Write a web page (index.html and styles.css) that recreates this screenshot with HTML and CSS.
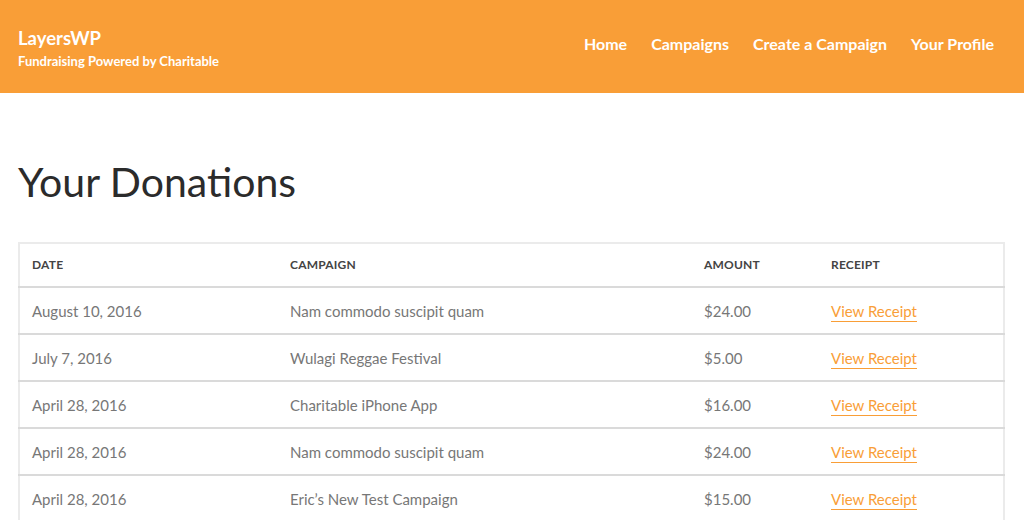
FILE: index.html
```html
<!DOCTYPE html>
<html>
<head>
<meta charset="utf-8">
<link rel="stylesheet" href="styles.css">
</head>
<body>
<header class="site-header">
  <div class="brand">
    <div class="site-title">LayersWP</div>
    <div class="site-tagline">Fundraising Powered by Charitable</div>
  </div>
  <nav class="nav">
    <a href="#">Home</a>
    <a href="#">Campaigns</a>
    <a href="#">Create a Campaign</a>
    <a href="#">Your Profile</a>
  </nav>
</header>
<main class="content">
  <h1 class="page-title">Your Donations</h1>
  <table class="donations">
    <thead>
      <tr><th class="c-date">Date</th><th class="c-camp">Campaign</th><th class="c-amt">Amount</th><th class="c-rec">Receipt</th></tr>
    </thead>
    <tbody>
      <tr><td>August 10, 2016</td><td>Nam commodo suscipit quam</td><td>$24.00</td><td><a href="#">View Receipt</a></td></tr>
      <tr><td>July 7, 2016</td><td>Wulagi Reggae Festival</td><td>$5.00</td><td><a href="#">View Receipt</a></td></tr>
      <tr><td>April 28, 2016</td><td>Charitable iPhone App</td><td>$16.00</td><td><a href="#">View Receipt</a></td></tr>
      <tr><td>April 28, 2016</td><td>Nam commodo suscipit quam</td><td>$24.00</td><td><a href="#">View Receipt</a></td></tr>
      <tr><td>April 28, 2016</td><td>Eric’s New Test Campaign</td><td>$15.00</td><td><a href="#">View Receipt</a></td></tr>
    </tbody>
  </table>
</main>
</body>
</html>
```

FILE: styles.css
```css
* { box-sizing: border-box; }
html, body { margin: 0; padding: 0; }
body {
  font-family: "Lato", "Open Sans", sans-serif;
  background: #fff;
  color: #333;
  overflow: hidden;
}
.site-header {
  background: #f99e37;
  height: 93px;
  display: flex;
  align-items: center;
  justify-content: space-between;
  padding: 0 30px 0 18px;
  color: #fff;
}
.brand { display: flex; flex-direction: column; gap: 4px; margin-top: 2px; }
.site-title { font-size: 18.5px; font-weight: 700; line-height: 22px; }
.site-tagline { font-size: 13px; font-weight: 700; line-height: 16px; }
.nav { display: flex; gap: 24px; margin-top: -6px; }
.nav a { color: #fff; text-decoration: none; font-weight: 700; font-size: 16px; }
.content { padding: 0 19px 0 18px; }
.page-title {
  font-weight: 400;
  font-size: 41px;
  line-height: 50px;
  margin: 0;
  padding: 64px 0 35px;
  color: #2b2b2b;
}
.donations {
  width: 100%;
  border-collapse: collapse;
  border: 2px solid #ebebeb;
}
.donations th {
  text-align: left;
  text-transform: uppercase;
  font-size: 12px;
  font-weight: 700;
  color: #444;
  height: 44px;
  padding: 0 12px 1px;
  letter-spacing: 0.2px;
}
.donations td {
  height: 47px;
  padding: 0 12px;
  font-size: 15px;
  color: #777;
  border-top: 2px solid #dadada;
}
.c-date { width: 259px; }
.c-camp { width: 414px; }
.c-amt { width: 127px; }
.donations a {
  color: #f99e37;
  text-decoration: none;
  border-bottom: 1px solid #f99e37;
  padding-bottom: 1px;
}
```
